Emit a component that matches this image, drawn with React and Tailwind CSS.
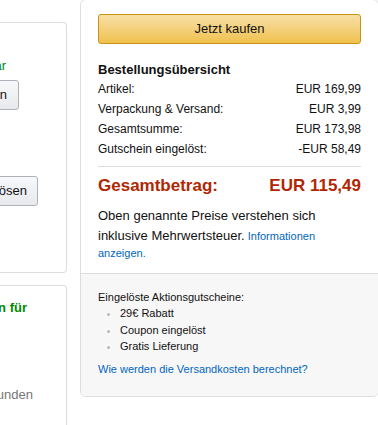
export default function App() {
  const rows = [
    ["Artikel:", "EUR 169,99"],
    ["Verpackung & Versand:", "EUR 3,99"],
    ["Gesamtsumme:", "EUR 173,98"],
    ["Gutschein eingelöst:", "-EUR 58,49"],
  ];

  return (
    <div
      className="w-[378px] h-[425px] overflow-hidden bg-white text-[#111]"
      style={{ fontFamily: '"Liberation Sans", Arial, sans-serif' }}
    >
      <div className="flex items-start">
        {/* LEFT COLUMN (cut off) */}
        <div className="w-[67px] shrink-0 overflow-hidden flex flex-col">
          <div className="mt-[22px] h-[251px] border border-l-0 border-[#ddd] rounded-r-[4px] pt-[34px]">
            <div className="flex justify-end pr-[60px] whitespace-nowrap">
              <span className="text-[13px] leading-[18px] text-[#008a00]">
                Ihr Guthaben ist jetzt verfügbar
              </span>
            </div>
            <div className="flex justify-end pr-[47px] mt-[5px] whitespace-nowrap">
              <button className="h-[30px] pl-[11px] pr-[11px] text-[13px] text-[#111] rounded-[3px] border border-[#adb1b8] bg-gradient-to-b from-[#f7f8fa] to-[#e7e9ec]">
                Anwenden
              </button>
            </div>
            <div className="flex justify-end pr-[28px] mt-[66px] whitespace-nowrap">
              <button className="h-[30px] pl-[10px] pr-[10px] text-[13px] text-[#111] rounded-[3px] border border-[#adb1b8] bg-gradient-to-b from-[#f7f8fa] to-[#e7e9ec]">
                Gutschein einlösen
              </button>
            </div>
          </div>

          <div className="mt-[12px] h-[200px] border border-l-0 border-[#ddd] rounded-r-[4px] pt-[13px]">
            <div className="flex justify-end pr-[39px] whitespace-nowrap">
              <span className="text-[13px] leading-[18px] font-bold text-[#008a00]">
                Jetzt Prime testen für
              </span>
            </div>
            <div className="flex justify-end pr-[33px] mt-[69px] whitespace-nowrap">
              <span className="text-[13px] leading-[18px] text-[#767676]">
                Verfügbar für Prime-Kunden
              </span>
            </div>
          </div>
        </div>

        {/* RIGHT: ORDER SUMMARY */}
        <div className="ml-[13px] w-[299px] shrink-0 mt-[-1px] border border-[#ddd] rounded-[6px] overflow-hidden">
          <div className="px-[17px] pt-[14px] pb-[12px]">
            <button className="w-full h-[30px] rounded-[3px] border border-[#c89411] bg-gradient-to-b from-[#f7dfa5] to-[#f0c14b] text-[13px] text-[#111]">
              Jetzt kaufen
            </button>

            <h3 className="mt-[16px] text-[13px] leading-[19px] font-bold">
              Bestellungsübersicht
            </h3>
            <div className="text-[12px] leading-[20px]">
              {rows.map(([label, value]) => (
                <div key={label} className="flex justify-between">
                  <span>{label}</span>
                  <span>{value}</span>
                </div>
              ))}
            </div>

            <div className="mt-[7px] border-t border-[#ddd]" />

            <div className="mt-[8px] flex justify-between text-[17px] leading-[22px] font-bold text-[#b12704]">
              <span>Gesamtbetrag:</span>
              <span>EUR 115,49</span>
            </div>

            <p className="mt-[9px] text-[11px] leading-[15px]">
              <span className="text-[13px] leading-[20px]">
                Oben genannte Preise verstehen sich inklusive Mehrwertsteuer.
              </span>{" "}
              <a href="#" className="text-[#0066c0]">
                Informationen anzeigen.
              </a>
            </p>
          </div>

          <div className="border-t border-[#ddd] bg-[#f7f7f7] px-[17px] pt-[15px] pb-[19px] text-[11px]">
            <div className="leading-[16px]">Eingelöste Aktionsgutscheine:</div>
            <ul className="list-disc pl-[22px] leading-[16.5px] marker:text-[#bbb]">
              <li>29€ Rabatt</li>
              <li>Coupon eingelöst</li>
              <li>Gratis Lieferung</li>
            </ul>
            <a href="#" className="block mt-[6px] leading-[16px] text-[#0066c0]">
              Wie werden die Versandkosten berechnet?
            </a>
          </div>
        </div>
      </div>
    </div>
  );
}
